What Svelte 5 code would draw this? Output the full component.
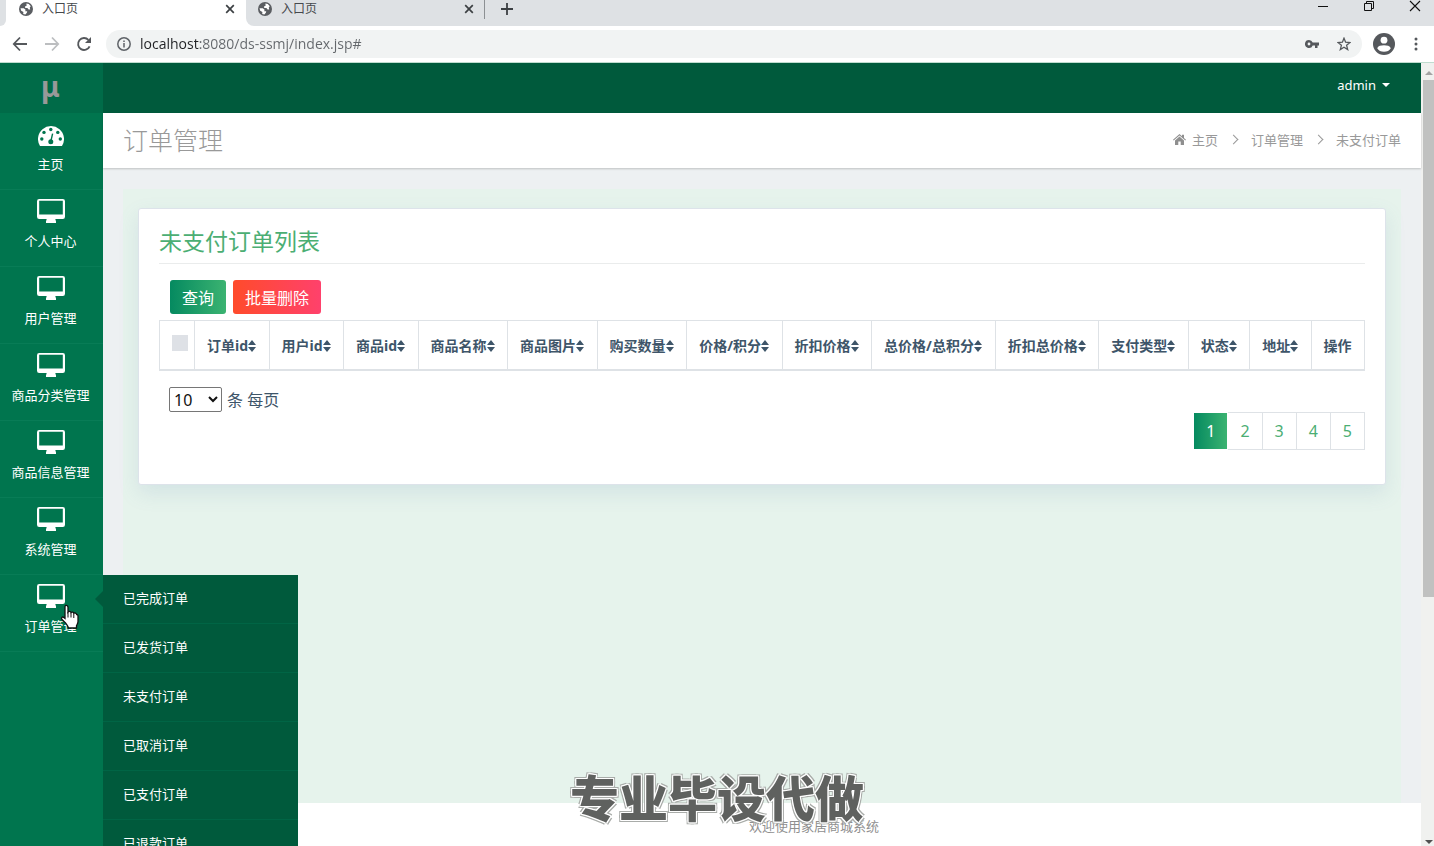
<script lang="ts">
  const menu = ['主页', '个人中心', '用户管理', '商品分类管理', '商品信息管理', '系统管理', '订单管理'];
  const submenu = ['已完成订单', '已发货订单', '未支付订单', '已取消订单', '已支付订单', '已退款订单'];
  const columns = [
    '订单id', '用户id', '商品id', '商品名称', '商品图片', '购买数量', '价格/积分',
    '折扣价格', '总价格/总积分', '折扣总价格', '支付类型', '状态', '地址',
  ];
  const pages = [1, 2, 3, 4, 5];

  let url = $state('localhost:8080/ds-ssmj/index.jsp#');
  let current = $state(1);
  let pageSize = $state('10');
</script>

{#snippet globe()}
  <svg class="globe" viewBox="0 0 14 14" width="14" height="14" aria-hidden="true">
    <circle cx="7" cy="7" r="7" fill="#5a5d61" />
    <path d="M1.500 6.200 4.800 6.300 6.600 7.800 6.200 9.200 8.200 9.300 8 10.600 6.400 12.600 4.200 12 4.400 10 2.200 8.800z" fill="#fff" />
    <path d="M7.400 1.400 9.800 2 11.800 4.300 10.800 5.200 11.200 7.400 9.600 7.600 8.400 6 6.300 5.900 5.900 4.600 7.600 3.800z" fill="#fff" />
  </svg>
{/snippet}

{#snippet cross()}
  <svg viewBox="0 0 10 10" width="10" height="10" aria-hidden="true">
    <path d="M1.2 1.2 8.8 8.8M8.8 1.2 1.2 8.8" stroke="#3c4043" stroke-width="1.7" />
  </svg>
{/snippet}

<div class="window">
  <div class="tabs">
    <div class="edge"></div>
    <div class="tab active">
      {@render globe()}
      <span>入口页</span>
      <button aria-label="关闭标签页">{@render cross()}</button>
    </div>
    <div class="rest">
      <div class="tab">
        {@render globe()}
        <span>入口页</span>
        <button aria-label="关闭标签页">{@render cross()}</button>
      </div>
      <button class="new-tab" aria-label="新标签页">
        <svg viewBox="0 0 12 12" width="12" height="12"><path d="M6 0v12M0 6h12" stroke="#3c4043" stroke-width="1.8" /></svg>
      </button>
      <div class="controls">
        <button aria-label="最小化">
          <svg viewBox="0 0 12 12" width="12" height="12"><path d="M1 6.5h10" stroke="#111" /></svg>
        </button>
        <button aria-label="还原">
          <svg viewBox="0 0 12 12" width="12" height="12" fill="none" stroke="#111"><path d="M1.5 3.5h7v7h-7zM3.5 3.5v-2h7v7h-2" /></svg>
        </button>
        <button aria-label="关闭">
          <svg viewBox="0 0 12 12" width="12" height="12"><path d="M1 1 11 11M11 1 1 11" stroke="#111" stroke-width="1.1" /></svg>
        </button>
      </div>
    </div>
  </div>

  <div class="toolbar">
    <button aria-label="后退">
      <svg viewBox="0 0 16 16" width="16" height="16" fill="none" stroke="#55585c" stroke-width="1.8"><path d="M15 8H2M8 1.5 1.8 8 8 14.5" /></svg>
    </button>
    <button aria-label="前进">
      <svg viewBox="0 0 16 16" width="16" height="16" fill="none" stroke="#bcbec0" stroke-width="1.8"><path d="M1 8h13M8 1.5 14.2 8 8 14.5" /></svg>
    </button>
    <button aria-label="刷新">
      <svg viewBox="0 0 16 16" width="16" height="16"><path d="M13.6 10.4A6 6 0 1 1 12.4 3.8" fill="none" stroke="#55585c" stroke-width="1.9" /><path d="M15 1v6H9z" fill="#55585c" /></svg>
    </button>
    <div class="address">
      <svg viewBox="0 0 14 14" width="14" height="14" fill="none" stroke="#5f6368" stroke-width="1.5"><circle cx="7" cy="7" r="6.2" /><path d="M7 6v4.4M7 3.4v1.5" /></svg>
      <input aria-label="地址" bind:value={url} spellcheck="false" />
      <svg viewBox="0 0 14 10" width="14" height="10"><path d="M4 1a4 4 0 1 0 3.7 5.4H10V9h2.5V6.4H14V3.6H7.7A4 4 0 0 0 4 1zm0 2.6a1.4 1.4 0 1 1 0 2.8 1.4 1.4 0 0 1 0-2.8z" fill="#55585c" fill-rule="evenodd" /></svg>
      <svg viewBox="0 0 14 14" width="14" height="14"><path d="M7 1.2 8.6 5.2 13 5.5 9.6 8.3 10.7 12.6 7 10.2 3.3 12.6 4.4 8.3 1 5.5 5.4 5.2z" fill="none" stroke="#55585c" stroke-width="1.3" /></svg>
    </div>
    <div class="profile">
      <button aria-label="用户">
        <svg viewBox="0 0 22 22" width="22" height="22"><circle cx="11" cy="11" r="11" fill="#55585c" /><circle cx="11" cy="7.2" r="3.4" fill="#fff" /><path d="M4.200 15.200C5 12.800 8 12.200 11 12.200s6 .6 6.800 3C16.500 17.600 14 18.800 11 18.800s-5.500-1.200-6.800-3.600z" fill="#fff" /></svg>
      </button>
      <button aria-label="菜单">
        <svg viewBox="0 0 4 14" width="4" height="14" fill="#55585c"><circle cx="2" cy="2" r="1.500" /><circle cx="2" cy="7" r="1.500" /><circle cx="2" cy="12" r="1.500" /></svg>
      </button>
    </div>
  </div>

  <div class="page">
    <nav class="sidebar">
      <a class="brand" href="#top">μ</a>
      <ul>
        {#each menu as item, i}
          <li>
            <a href="#menu">
              <span class="icon">
                {#if i === 0}
                  <svg viewBox="0 0 26 20" width="26" height="20">
                    <path d="M2 20A13 13 0 1 1 24 20z" fill="#fff" />
                    <g fill="#00754e">
                      <circle cx="3.800" cy="13" r="1.700" /><circle cx="6" cy="6.400" r="1.700" /><circle cx="12.800" cy="3.500" r="1.700" />
                      <circle cx="19.800" cy="6.400" r="1.700" /><circle cx="22.300" cy="13" r="1.700" /><circle cx="12.800" cy="15.700" r="2.500" />
                    </g>
                    <path d="M12.800 15.500 14.600 7.600" stroke="#00754e" stroke-width="1.400" />
                  </svg>
                {:else}
                  <svg viewBox="0 0 28 24" width="28" height="24">
                    <path d="M2.200 0h23.600A2.200 2.200 0 0 1 28 2.200v15.600a2.200 2.200 0 0 1-2.200 2.200H18.300l.7 2.500V24H9v-1.500L9.700 20H2.200A2.200 2.200 0 0 1 0 17.800V2.200A2.200 2.200 0 0 1 2.200 0zM2.200 1.800v13.600h23.600V1.800z" fill="#fff" fill-rule="evenodd" />
                  </svg>
                {/if}
              </span>
              {item}
            </a>
            {#if i === menu.length - 1}
              <ul class="submenu">
                {#each submenu as sub}
                  <li><a href="#orders">{sub}</a></li>
                {/each}
              </ul>
              <svg class="pointer" viewBox="0 0 20 26" width="20" height="26" aria-hidden="true">
                <path d="M5.500 1.500c1.500-.4 2.500.5 2.500 2v4.500c.6-.9 2.600-.8 3 .5.800-.8 2.500-.5 2.800.8 1-.7 2.600-.2 2.800 1.200.8-.2 1.400.5 1.400 1.800v5.200c0 2-1 3-1.500 4.200v2.300H8.500c-.4-2-1.800-3.300-3-5.200L1.800 15.300c-.9-1.700.8-3 2.100-1.700L5 14.500V3c0-.7.1-1.200.5-1.500z" fill="#fff" stroke="#111" stroke-width="1.300" />
                <path d="M8 8v5.500M11 9v4.500M13.800 10v4" stroke="#111" stroke-width="1" />
              </svg>
            {/if}
          </li>
        {/each}
      </ul>
    </nav>

    <main>
      <header class="topbar">
        <button>admin <i class="caret"></i></button>
      </header>

      <div class="heading">
        <h1>订单管理</h1>
        <ol>
          <li>
            <svg viewBox="0 0 13 11" width="13" height="11" fill="#8f8f8f"><path d="M6.500 0 9 2.200V.8h2v3.100L13 5.700l-.7.800L6.500 1.500.7 6.500 0 5.700z" /><path d="M6.500 2.600 11 6.500V11H7.700V7.600H5.300V11H2V6.500z" /></svg>
            <a href="#home">主页</a>
          </li>
          <li><a href="#orders">订单管理</a></li>
          <li>未支付订单</li>
        </ol>
      </div>

      <div class="content">
        <div class="area">
          <section class="card">
            <h2>未支付订单列表</h2>
            <div class="actions">
              <button class="query">查询</button>
              <button class="remove">批量删除</button>
            </div>
            <table>
              <thead>
                <tr>
                  <th class="check"><input type="checkbox" aria-label="全选" /></th>
                  {#each columns as column}
                    <th>{column}<svg class="sort" viewBox="0 0 8 12" width="8" height="12"><path d="M4 0 8 5H0zM0 7h8L4 12z" fill="#3e5569" /></svg></th>
                  {/each}
                  <th>操作</th>
                </tr>
              </thead>
            </table>
            <label class="size">
              <select bind:value={pageSize}>
                <option>10</option>
                <option>25</option>
                <option>50</option>
              </select>
              条 每页
            </label>
            <div class="pages">
              {#each pages as page}
                <button class:current={page === current} onclick={() => (current = page)}>{page}</button>
              {/each}
            </div>
          </section>
        </div>
      </div>

      <footer>欢迎使用家居商城系统</footer>
    </main>

    <div class="scrollbar">
      <i class="up"></i>
      <div class="thumb"></div>
      <i class="down"></i>
    </div>
  </div>

  <div class="caption">专业毕设代做</div>
</div>

<style>
  .window {
    position: relative;
    display: flex;
    flex-direction: column;
    height: 100vh;
    overflow: hidden;
    background: #fff;
    font-family: 'Noto Sans', 'Noto Sans CJK SC', sans-serif;
    font-size: 13px;
  }

  .window * {
    box-sizing: border-box;
  }

  button {
    padding: 0;
    border: none;
    background: none;
    font: inherit;
    color: inherit;
    cursor: pointer;
  }

  svg {
    display: block;
    flex: none;
  }

  a {
    color: inherit;
    text-decoration: none;
  }

  ul,
  ol {
    margin: 0;
    padding: 0;
    list-style: none;
  }

  .tabs {
    display: flex;
    flex: none;
    height: 26px;
  }

  .edge {
    width: 6px;
    background: #dee1e4;
    border-bottom-right-radius: 8px;
  }

  .tab {
    display: flex;
    align-items: center;
    gap: 9px;
    width: 240px;
    padding: 0 11px 8px 13px;
    font-size: 12px;
    color: #46494d;
  }

  .tab span {
    flex: 1;
    line-height: 18px;
  }

  .rest {
    display: flex;
    flex: 1;
    background: #dee1e4;
    border-bottom-left-radius: 8px;
  }

  .rest .tab {
    width: 239px;
    padding-left: 12px;
    background: linear-gradient(#8c9093, #8c9093) right top / 1px 19px no-repeat;
  }

  .new-tab {
    padding: 0 16px 8px;
  }

  .controls {
    display: flex;
    gap: 34px;
    margin-left: auto;
    padding: 0 13px 14px 0;
  }

  .toolbar {
    display: flex;
    flex: none;
    align-items: center;
    gap: 16px;
    height: 37px;
    padding: 0 16px 0 12px;
    border-bottom: 1px solid #bfdccf;
  }

  .profile {
    display: flex;
    align-items: center;
    gap: 19px;
  }

  .address {
    display: flex;
    flex: 1;
    align-items: center;
    gap: 18px;
    height: 28px;
    margin-left: -2px;
    margin-right: -5px;
    padding: 0 11px;
    border-radius: 14px;
    background: #f1f3f3;
  }

  .address input {
    flex: 1;
    min-width: 0;
    margin-left: -9px;
    padding: 0;
    border: none;
    outline: none;
    font-family: 'Open Sans', sans-serif;
    font-size: 14px;
    line-height: 20px;
    color: transparent;
    background: linear-gradient(90deg, #202124 60px, #63676b 60px);
    background-clip: text;
  }

  .page {
    display: flex;
    flex: 1;
    min-height: 0;
  }

  .sidebar {
    flex: none;
    width: 103px;
    background: #00754e;
    color: #fff;
  }

  .brand {
    display: flex;
    align-items: center;
    justify-content: center;
    height: 50px;
    padding: 0 2px 4px 0;
    background: #006b48;
    color: #999;
    font-size: 28px;
    font-weight: 700;
  }

  .sidebar li {
    position: relative;
    border-bottom: 1px solid #087c56;
  }

  .sidebar > ul > li > a {
    display: flex;
    flex-direction: column;
    align-items: center;
    gap: 8px;
    padding: 9px 2px 15px 0;
    line-height: 20px;
  }

  .icon {
    display: flex;
    align-items: flex-end;
    height: 24px;
  }

  .submenu {
    position: absolute;
    z-index: 2;
    top: 0;
    left: 103px;
    width: 195px;
    background: #005a3c;
  }

  .submenu::before {
    content: '';
    position: absolute;
    top: 16px;
    left: -8px;
    border: solid transparent;
    border-width: 8px 8px 8px 0;
    border-right-color: #005a3c;
  }

  .submenu li {
    border-bottom-color: #006545;
  }

  .submenu a {
    display: block;
    padding: 13px 20px 15px;
    line-height: 20px;
  }

  .pointer {
    position: absolute;
    z-index: 3;
    top: 29px;
    left: 60px;
  }

  main {
    display: flex;
    flex: 1;
    flex-direction: column;
    min-width: 0;
  }

  .topbar {
    display: flex;
    flex: none;
    justify-content: flex-end;
    height: 50px;
    padding: 0 31px 6px 0;
    background: #005a3c;
    color: #fff;
  }

  .topbar button {
    display: flex;
    align-items: center;
    gap: 6px;
  }

  .caret {
    border: solid transparent;
    border-width: 4px 4px 0;
    border-top-color: #fff;
  }

  .heading {
    z-index: 1;
    display: flex;
    flex: none;
    align-items: center;
    justify-content: space-between;
    height: 55px;
    padding: 0 20px 2px;
    background: #fff;
    box-shadow: 0 1px 2px rgba(0, 0, 0, 0.2);
    color: #999;
  }

  h1 {
    margin: 0;
    font-size: 25px;
    font-weight: 300;
    line-height: 32px;
  }

  .heading ol,
  .heading li {
    display: flex;
    align-items: center;
  }

  .heading li {
    gap: 6px;
  }

  .heading li + li::before {
    content: '';
    width: 6px;
    height: 6px;
    margin: 0 8px 0 12px;
    border: solid #999;
    border-width: 1px 1px 0 0;
    transform: rotate(45deg);
  }

  .content {
    display: flex;
    flex: 1;
    min-height: 0;
    padding: 21px 20px 0;
    background: #edf0f2;
  }

  .area {
    flex: 1;
    min-width: 0;
    padding: 19px 15px;
    background: #e6f3ec;
  }

  .card {
    padding: 18px 20px 34px;
    border: 1px solid #dde3ea;
    border-radius: 3px;
    background: #fff;
    box-shadow: 0 8px 20px rgba(100, 140, 180, 0.15);
    color: #3e5569;
  }

  h2 {
    margin: 0 0 16px;
    padding-bottom: 8px;
    border-bottom: 1px solid #eaecec;
    color: #4bae73;
    font-size: 23px;
    font-weight: 400;
    line-height: 28px;
  }

  .actions {
    display: flex;
    gap: 7px;
    margin: 0 11px 6px;
  }

  .actions button {
    height: 34px;
    padding: 0 12px 1px;
    border-radius: 3px;
    color: #fff;
    font-size: 16px;
  }

  .actions .query,
  .pages .current {
    background: linear-gradient(90deg, #058a60, #3bb371);
  }

  .actions .remove {
    background: linear-gradient(90deg, #ff4b2b, #ff416c);
  }

  table {
    width: 100%;
    border-collapse: collapse;
  }

  th {
    height: 49px;
    padding: 3px 12px 0;
    border: 1px solid #dee2e6;
    border-bottom-width: 2px;
    font-size: 14px;
    font-weight: 700;
    line-height: 20px;
    text-align: left;
    white-space: nowrap;
  }

  .check {
    width: 35px;
    padding: 0 6px 4px 12px;
  }

  .check input {
    display: block;
    appearance: none;
    width: 16px;
    height: 16px;
    margin: 0;
    background: #dee1e6;
  }

  .sort {
    display: inline-block;
    vertical-align: -1px;
  }

  .size {
    display: flex;
    align-items: center;
    gap: 5px;
    margin: 16px 10px 0;
    font-size: 16px;
  }

  select {
    width: 53px;
    height: 25px;
    padding: 0;
    border: 1px solid #767676;
    border-radius: 2px;
    background: #fff;
    color: #111;
    font: inherit;
  }

  .pages {
    display: flex;
    justify-content: flex-end;
  }

  .pages button {
    height: 38px;
    padding: 0 12px;
    border: 1px solid #dee2e6;
    border-left: none;
    color: #4bae73;
    font-size: 16px;
  }

  .pages .current {
    border-color: #fff;
    color: #fff;
    background-clip: padding-box;
  }

  footer {
    flex: none;
    height: 43px;
    padding: 13px 0 0 104px;
    background: #fff;
    color: #8f8f8f;
    line-height: 20px;
    text-align: center;
  }

  .scrollbar {
    display: flex;
    flex: none;
    flex-direction: column;
    align-items: flex-end;
    width: 13px;
    background: #f0f1ef;
  }

  .thumb {
    flex: none;
    width: 11px;
    height: 66%;
    margin-top: 5px;
    background: #c0c1c0;
  }

  .up,
  .down {
    margin-right: 1px;
    border: 4px solid transparent;
  }

  .up {
    margin-top: 4px;
    border-bottom-color: #a3a3a3;
  }

  .down {
    margin-top: auto;
    border-top-color: #505050;
    border-bottom-width: 2px;
  }

  .caption {
    position: absolute;
    z-index: 5;
    bottom: 14px;
    left: 0;
    right: 0;
    color: #5f615f;
    font-size: 49px;
    font-weight: 900;
    line-height: 68px;
    text-align: center;
    text-shadow:
      -1px -1px 0 #fff, 1px -1px 0 #fff, -1px 1px 0 #fff, 1px 1px 0 #fff,
      0 -1px 0 #fff, 0 1px 0 #fff, -1px 0 0 #fff, 1px 0 0 #fff,
      -2px -2px 0 #a9aca9, 2px -2px 0 #a9aca9, -2px 2px 0 #a9aca9, 2px 2px 0 #a9aca9;
    pointer-events: none;
  }
</style>
